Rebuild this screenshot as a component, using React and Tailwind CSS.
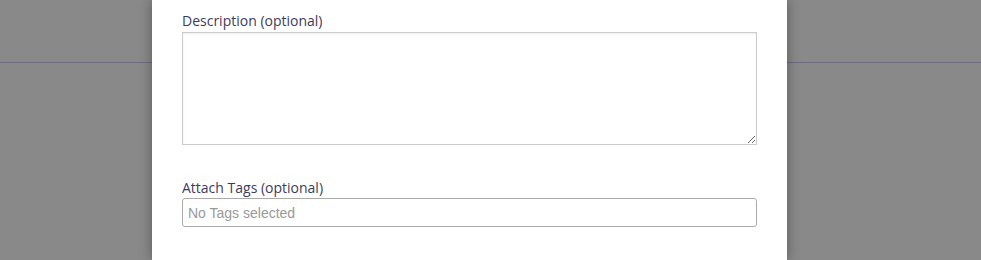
export default function App() {
  return (
    <div className="relative h-[260px] w-full overflow-hidden bg-[#898989]">
      {/* page header behind the backdrop */}
      <div className="h-[63px] border-b border-[#6e6a80]" />

      <div className="absolute left-[152px] top-0 h-full w-[635px] bg-white px-[30px] pt-[11px] shadow-[0_0_12px_rgba(0,0,0,0.35)]">
        <label
          className="block text-[14px] leading-[19px] text-[#3d3b5c] mb-[2px]"
          style={{ fontFamily: '"Open Sans", sans-serif' }}
        >
          Description (optional)
        </label>
        <textarea className="block h-[113px] w-full resize-y border border-[#cccccc] bg-white shadow-[inset_0_1px_2px_rgba(0,0,0,0.08)] outline-none" />

        <label
          className="mt-[33px] block text-[14px] leading-[19px] text-[#3d3b5c] mb-[1px]"
          style={{ fontFamily: '"Open Sans", sans-serif' }}
        >
          Attach Tags (optional)
        </label>
        <input
          placeholder="No Tags selected"
          className="block h-[29px] w-full rounded-[3px] border border-[#aaaaaa] px-[5px] text-[14px] text-[#333] placeholder:text-[#999999] outline-none"
          style={{ fontFamily: '"Liberation Sans", Arial, sans-serif' }}
        />
      </div>
    </div>
  );
}
